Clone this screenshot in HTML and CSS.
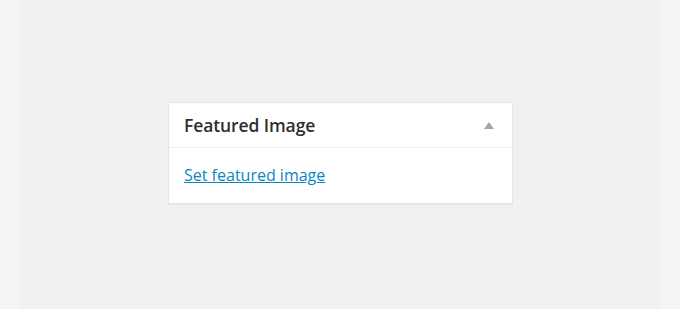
FILE: index.html
```html
<!DOCTYPE html>
<html>
<head>
<meta charset="utf-8">
<link rel="stylesheet" href="styles.css">
</head>
<body>
<div class="page">
  <div class="side"></div>
  <div class="main">
    <div class="postbox">
      <div class="hndle">
        <span class="title">Featured Image</span>
        <span class="arrow"></span>
      </div>
      <div class="inside">
        <a href="#" class="link">Set featured image</a>
      </div>
    </div>
  </div>
  <div class="side"></div>
</div>
</body>
</html>
```
FILE: styles.css
```css
html, body {
  margin: 0;
  padding: 0;
  width: 680px;
  height: 309px;
  overflow: hidden;
  background: #f4f4f4;
  font-family: "Open Sans", "Noto Sans", sans-serif;
}
.page {
  display: flex;
  width: 680px;
  height: 309px;
}
.side {
  width: 19px;
  background: #f4f4f4;
}
.main {
  flex: 1;
  background: #f1f1f1;
  padding-top: 102px;
  padding-left: 149px;
}
.postbox {
  width: 343px;
  height: 100px;
  background: #fff;
  border: 1px solid #e5e5e5;
  box-shadow: 0 1px 1px rgba(0,0,0,0.04);
  display: flex;
  flex-direction: column;
}
.hndle {
  height: 44px;
  border-bottom: 1px solid #eee;
  display: flex;
  align-items: center;
  justify-content: space-between;
  padding: 0 15px;
}
.title {
  font-size: 17.5px;
  color: #2b2f33;
  font-weight: 600;
  letter-spacing: -0.1px;
}
.arrow {
  width: 0;
  height: 0;
  border-left: 5px solid transparent;
  border-right: 5px solid transparent;
  border-bottom: 7px solid #a0a5aa;
  margin-right: 3px;
}
.inside {
  padding: 16px 15px 0;
}
.link {
  font-size: 16px;
  color: #0a86c2;
  font-weight: 500;
  text-decoration: underline;
}
```
